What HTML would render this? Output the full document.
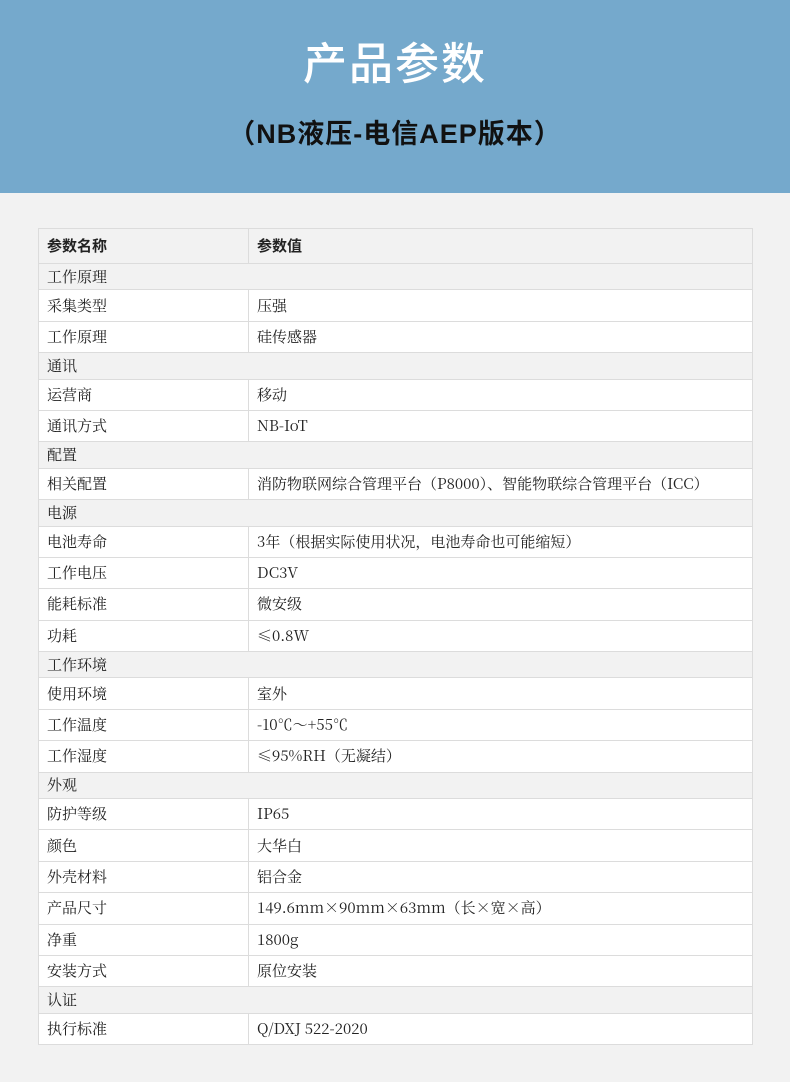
<!DOCTYPE html>
<html><head><meta charset="utf-8"><style>
*{margin:0;padding:0;box-sizing:border-box}
body{width:790px;height:1082px;background:#f2f2f2;position:relative;overflow:hidden;font-family:"Noto Serif CJK SC","Liberation Serif",serif;}
.hd{position:absolute;left:0;top:0;width:790px;height:193px;background:#75a9cc}
.t1{position:absolute;top:32px;width:790px;text-align:center;color:#fff;font:500 44px "Noto Sans CJK SC","Liberation Sans",sans-serif;letter-spacing:2px;line-height:56px}
.t2{position:absolute;top:112px;width:790px;text-align:center;color:#111;font:700 27px "Liberation Sans","Noto Sans CJK SC",sans-serif;letter-spacing:1px}
table{position:absolute;left:38px;top:228px;width:715px;border-collapse:collapse;font-size:15px;color:#222;line-height:18px}
td{border:1px solid #dcdcdc;padding:0 0 0 8px;background:#fff;vertical-align:middle}
td.a{width:210px}
tr.d td{height:31.4px}
tr.c td{height:26.4px;background:#f2f2f2}
tr.h td{height:35px;background:#f2f2f2;font-weight:bold;font-family:"Noto Sans CJK SC","Liberation Sans",sans-serif}
</style></head><body>
<div class="hd"><div class="t1">产品参数</div><div class="t2">（NB液压-电信AEP版本）</div></div>
<table>
<tr class="h"><td class="a">参数名称</td><td>参数值</td></tr>
<tr class="c"><td colspan="2">工作原理</td></tr>
<tr class="d"><td class="a">采集类型</td><td>压强</td></tr>
<tr class="d"><td class="a">工作原理</td><td>硅传感器</td></tr>
<tr class="c"><td colspan="2">通讯</td></tr>
<tr class="d"><td class="a">运营商</td><td>移动</td></tr>
<tr class="d"><td class="a">通讯方式</td><td>NB-IoT</td></tr>
<tr class="c"><td colspan="2">配置</td></tr>
<tr class="d"><td class="a">相关配置</td><td>消防物联网综合管理平台（P8000）、智能物联综合管理平台（ICC）</td></tr>
<tr class="c"><td colspan="2">电源</td></tr>
<tr class="d"><td class="a">电池寿命</td><td>3年（根据实际使用状况，电池寿命也可能缩短）</td></tr>
<tr class="d"><td class="a">工作电压</td><td>DC3V</td></tr>
<tr class="d"><td class="a">能耗标准</td><td>微安级</td></tr>
<tr class="d"><td class="a">功耗</td><td>≤0.8W</td></tr>
<tr class="c"><td colspan="2">工作环境</td></tr>
<tr class="d"><td class="a">使用环境</td><td>室外</td></tr>
<tr class="d"><td class="a">工作温度</td><td>-10℃～+55℃</td></tr>
<tr class="d"><td class="a">工作湿度</td><td>≤95%RH（无凝结）</td></tr>
<tr class="c"><td colspan="2">外观</td></tr>
<tr class="d"><td class="a">防护等级</td><td>IP65</td></tr>
<tr class="d"><td class="a">颜色</td><td>大华白</td></tr>
<tr class="d"><td class="a">外壳材料</td><td>铝合金</td></tr>
<tr class="d"><td class="a">产品尺寸</td><td>149.6mm×90mm×63mm（长×宽×高）</td></tr>
<tr class="d"><td class="a">净重</td><td>1800g</td></tr>
<tr class="d"><td class="a">安装方式</td><td>原位安装</td></tr>
<tr class="c"><td colspan="2">认证</td></tr>
<tr class="d"><td class="a">执行标准</td><td>Q/DXJ 522-2020</td></tr>
</table>
</body></html>
